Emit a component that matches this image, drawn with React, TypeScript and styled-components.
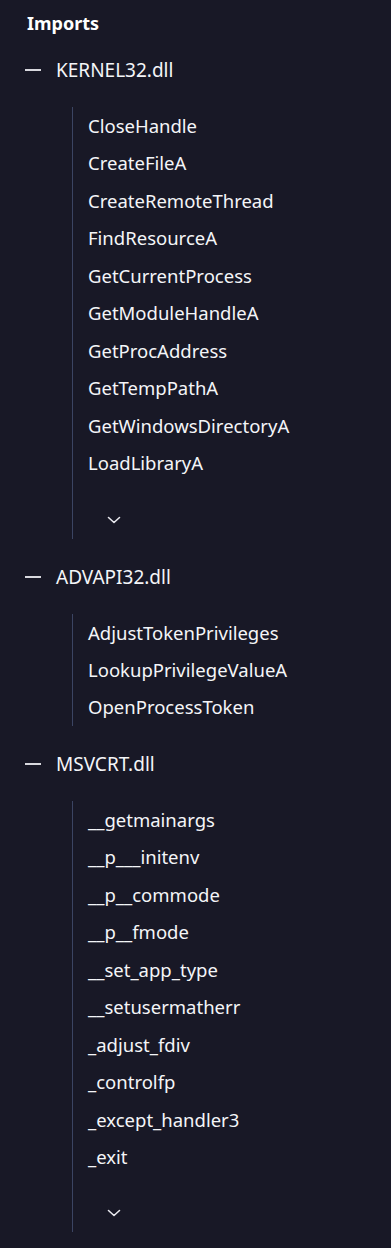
import React from "react";
import styled, { createGlobalStyle } from "styled-components";

const GlobalStyle = createGlobalStyle`
  html, body {
    margin: 0;
    padding: 0;
    background: #181826;
  }
  body {
    font-family: "Noto Sans", "Open Sans", sans-serif;
    color: #f4f5f8;
  }
`;

interface Dll {
  name: string;
  funcs: string[];
  more?: boolean;
}

const imports: Dll[] = [
  {
    name: "KERNEL32.dll",
    funcs: [
      "CloseHandle",
      "CreateFileA",
      "CreateRemoteThread",
      "FindResourceA",
      "GetCurrentProcess",
      "GetModuleHandleA",
      "GetProcAddress",
      "GetTempPathA",
      "GetWindowsDirectoryA",
      "LoadLibraryA",
    ],
    more: true,
  },
  {
    name: "ADVAPI32.dll",
    funcs: ["AdjustTokenPrivileges", "LookupPrivilegeValueA", "OpenProcessToken"],
  },
  {
    name: "MSVCRT.dll",
    funcs: [
      "__getmainargs",
      "__p___initenv",
      "__p__commode",
      "__p__fmode",
      "__set_app_type",
      "__setusermatherr",
      "_adjust_fdiv",
      "_controlfp",
      "_except_handler3",
      "_exit",
    ],
    more: true,
  },
];

const Page = styled.div`
  width: 391px;
  min-height: 1248px;
  box-sizing: border-box;
  padding: 10px 0 0 27px;
`;

const Title = styled.h2`
  margin: 0 0 21px;
  font-size: 18px;
  font-weight: 700;
  line-height: 26px;
  color: #ffffff;
`;

const Group = styled.section`
  display: flex;
  flex-direction: column;
  margin-bottom: 25px;
`;

const GroupHeader = styled.div`
  display: flex;
  align-items: center;
  height: 26px;
  font-size: 19px;
`;

const Dash = styled.span`
  width: 16px;
  height: 2px;
  background: #d8d8de;
  margin: 0 15px 0 -2px;
`;

const FuncList = styled.ul`
  list-style: none;
  margin: 24px 0 0 45px;
  padding: 0 0 0 15px;
  border-left: 1px solid #3b4462;
`;

const Func = styled.li`
  font-size: 18.5px;
  line-height: 37.45px;
  color: #f4f5f8;
  white-space: nowrap;
`;

const MoreRow = styled.li`
  height: 57px;
  box-sizing: border-box;
  display: flex;
  align-items: flex-end;
  padding: 0 0 14px 19px;
  color: #e8e8ee;
`;

function Chevron() {
  return (
    <svg width="14" height="10" viewBox="0 0 14 10" fill="none">
      <path d="M1.5 2.5l5.5 5 5.5-5" stroke="currentColor" strokeWidth="1.6" strokeLinecap="round" strokeLinejoin="round" />
    </svg>
  );
}

export default function App() {
  return (
    <Page>
      <GlobalStyle />
      <Title>Imports</Title>
      {imports.map((dll) => (
        <Group key={dll.name}>
          <GroupHeader>
            <Dash />
            {dll.name}
          </GroupHeader>
          <FuncList>
            {dll.funcs.map((f) => (
              <Func key={f}>{f}</Func>
            ))}
            {dll.more && (
              <MoreRow>
                <Chevron />
              </MoreRow>
            )}
          </FuncList>
        </Group>
      ))}
    </Page>
  );
}
